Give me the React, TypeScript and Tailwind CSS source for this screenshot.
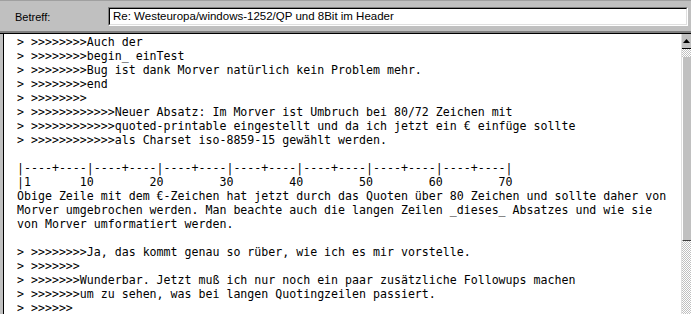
const lines = [
  "> >>>>>>>>Auch der",
  "> >>>>>>>>begin_ einTest",
  "> >>>>>>>>Bug ist dank Morver natürlich kein Problem mehr.",
  "> >>>>>>>>end",
  "> >>>>>>>>",
  "> >>>>>>>>>>>>Neuer Absatz: Im Morver ist Umbruch bei 80/72 Zeichen mit",
  "> >>>>>>>>>>>>quoted-printable eingestellt und da ich jetzt ein € einfüge sollte",
  "> >>>>>>>>>>>>als Charset iso-8859-15 gewählt werden.",
  "",
  "|----+----|----+----|----+----|----+----|----+----|----+----|----+----|",
  "|1       10        20        30        40        50        60        70",
  "Obige Zeile mit dem €-Zeichen hat jetzt durch das Quoten über 80 Zeichen und sollte daher von",
  "Morver umgebrochen werden. Man beachte auch die langen Zeilen _dieses_ Absatzes und wie sie",
  "von Morver umformatiert werden.",
  "",
  "> >>>>>>>>Ja, das kommt genau so rüber, wie ich es mir vorstelle.",
  "> >>>>>>>",
  "> >>>>>>>Wunderbar. Jetzt muß ich nur noch ein paar zusätzliche Followups machen",
  "> >>>>>>>um zu sehen, was bei langen Quotingzeilen passiert.",
  "> >>>>>>",
];

export default function App() {
  return (
    <div className="w-[691px] h-[314px] overflow-hidden bg-[#c0c0c0] flex flex-col">
      {/* Header: subject field */}
      <div className="h-[33px] shrink-0 flex items-start border-t border-t-[#a0a0a0] border-b-2 border-b-[#808080]">
        <div className="w-[108px] pl-[15px] pt-[8px] text-[11px] text-black font-['Liberation_Sans',Arial,sans-serif]">
          Betreff:
        </div>
        <div className="mt-[6px] w-[580px] h-[19px] border border-t-[#808080] border-l-[#808080] border-r-white border-b-white">
          <div className="h-full bg-white border border-t-black border-l-black border-r-[#dfdfdf] border-b-[#dfdfdf] pl-[3px] text-[11.5px] leading-[15px] text-black font-['Liberation_Sans',Arial,sans-serif]">
            Re: Westeuropa/windows-1252/QP und 8Bit im Header
          </div>
        </div>
      </div>

      {/* Body */}
      <div className="flex-1 flex min-h-0 border-t border-t-black">
        <div className="w-[4px] shrink-0 bg-[#c0c0c0] border-r border-r-black" />
        <div className="flex-1 bg-white pl-[13px] pt-[1px] overflow-hidden whitespace-pre text-[11.6px] leading-[14px] text-black font-['DejaVu_Sans_Mono',monospace]">
          {lines.map((l, i) => (
            <div key={i} className="h-[14px]">
              {l}
            </div>
          ))}
        </div>
        {/* Scrollbar */}
        <div className="w-[10px] shrink-0 flex flex-col border-l border-l-[#dfdfdf]">
          <div className="h-[15px] bg-[#c0c0c0] border-b border-b-black flex items-center justify-center">
            <svg width="7" height="4" viewBox="0 0 7 4">
              <path d="M3.5 0 L7 4 L0 4 Z" fill="black" />
            </svg>
          </div>
          <div className="h-[8px] bg-[repeating-conic-gradient(#c0c0c0_0%_25%,#ffffff_0%_50%)] bg-[length:2px_2px]" />
          <div className="h-[184px] bg-[#c0c0c0] border-l border-l-white border-b border-b-[#404040]" />
          <div className="flex-1 bg-[repeating-conic-gradient(#c0c0c0_0%_25%,#ffffff_0%_50%)] bg-[length:2px_2px]" />
        </div>
      </div>
    </div>
  );
}
